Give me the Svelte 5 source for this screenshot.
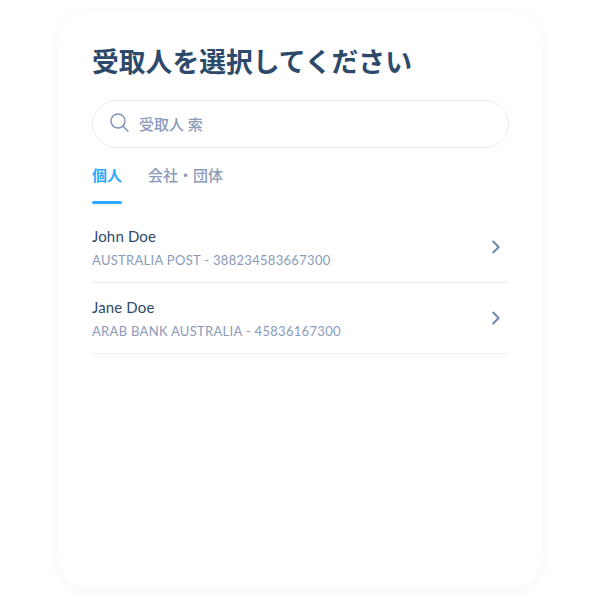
<script>
  let recipients = [
    { name: 'John Doe', detail: 'AUSTRALIA POST - 388234583667300' },
    { name: 'Jane Doe', detail: 'ARAB BANK AUSTRALIA - 45836167300' }
  ];
</script>

<main class="page">
  <section class="card">
    <h1>受取人を選択してください</h1>

    <div class="search">
      <svg width="20" height="20" viewBox="0 0 20 20" fill="none" stroke="#8294b5" stroke-width="1.5" stroke-linecap="round">
        <circle cx="8" cy="8" r="7" />
        <path d="M13.2 13.4l4.8 4.8" />
      </svg>
      <span>受取人 索</span>
    </div>

    <div class="tabs">
      <div class="tab active">個人</div>
      <div class="tab">会社・団体</div>
    </div>

    <ul>
      {#each recipients as r}
        <li>
          <div class="info">
            <div class="name">{r.name}</div>
            <div class="detail">{r.detail}</div>
          </div>
          <svg width="8" height="14" viewBox="0 0 8 14" fill="none" stroke="#7488ad" stroke-width="2" stroke-linecap="round" stroke-linejoin="round">
            <path d="M1.2 1.5L6.6 7l-5.4 5.5" />
          </svg>
        </li>
      {/each}
    </ul>
  </section>
</main>

<style>
  :global(body) {
    background: #fff;
  }

  .page {
    padding: 12px 57px;
    font-family: "Lato", "Noto Sans CJK JP", sans-serif;
  }

  .card {
    box-sizing: border-box;
    height: 576px;
    padding: 32px 35px 0;
    border-radius: 32px;
    background: #fff;
    box-shadow: 0 2px 12px rgba(40, 60, 110, 0.06);
  }

  h1 {
    margin: 0 0 20px;
    font-size: 26.8px;
    line-height: 36px;
    font-weight: 700;
    color: #2d4a6b;
  }

  .search {
    display: flex;
    align-items: center;
    gap: 9px;
    box-sizing: border-box;
    width: 417px;
    height: 48px;
    padding: 0 17px 2px;
    border: 1px solid #e8edf5;
    border-radius: 24px;
    font-size: 15px;
    font-weight: 500;
    color: #8a9bbb;
  }

  .tabs {
    display: flex;
    gap: 26px;
    margin-top: 15px;
    font-size: 15px;
    line-height: 24px;
    font-weight: 500;
  }

  .tab {
    height: 41px;
    color: #8a9bbb;
  }

  .tab.active {
    color: #2fa8ff;
    font-weight: 700;
  }

  .tab.active::after {
    content: "";
    display: block;
    height: 3px;
    margin-top: 14px;
    border-radius: 2px;
    background: #2fa8ff;
  }

  ul {
    margin: 8px 0 0;
    padding: 0;
    list-style: none;
  }

  li {
    display: flex;
    align-items: center;
    justify-content: space-between;
    box-sizing: border-box;
    height: 71px;
    padding: 0 8px 0 0;
    border-bottom: 1px solid #eceff6;
  }

  .info {
    padding-top: 1px;
  }

  .name {
    font-size: 15px;
    line-height: 24px;
    font-weight: 400;
    letter-spacing: 0.15px;
    color: #2d4a6b;
  }

  .detail {
    font-size: 13px;
    line-height: 24px;
    letter-spacing: 0.3px;
    color: #8a9bbb;
  }
</style>
